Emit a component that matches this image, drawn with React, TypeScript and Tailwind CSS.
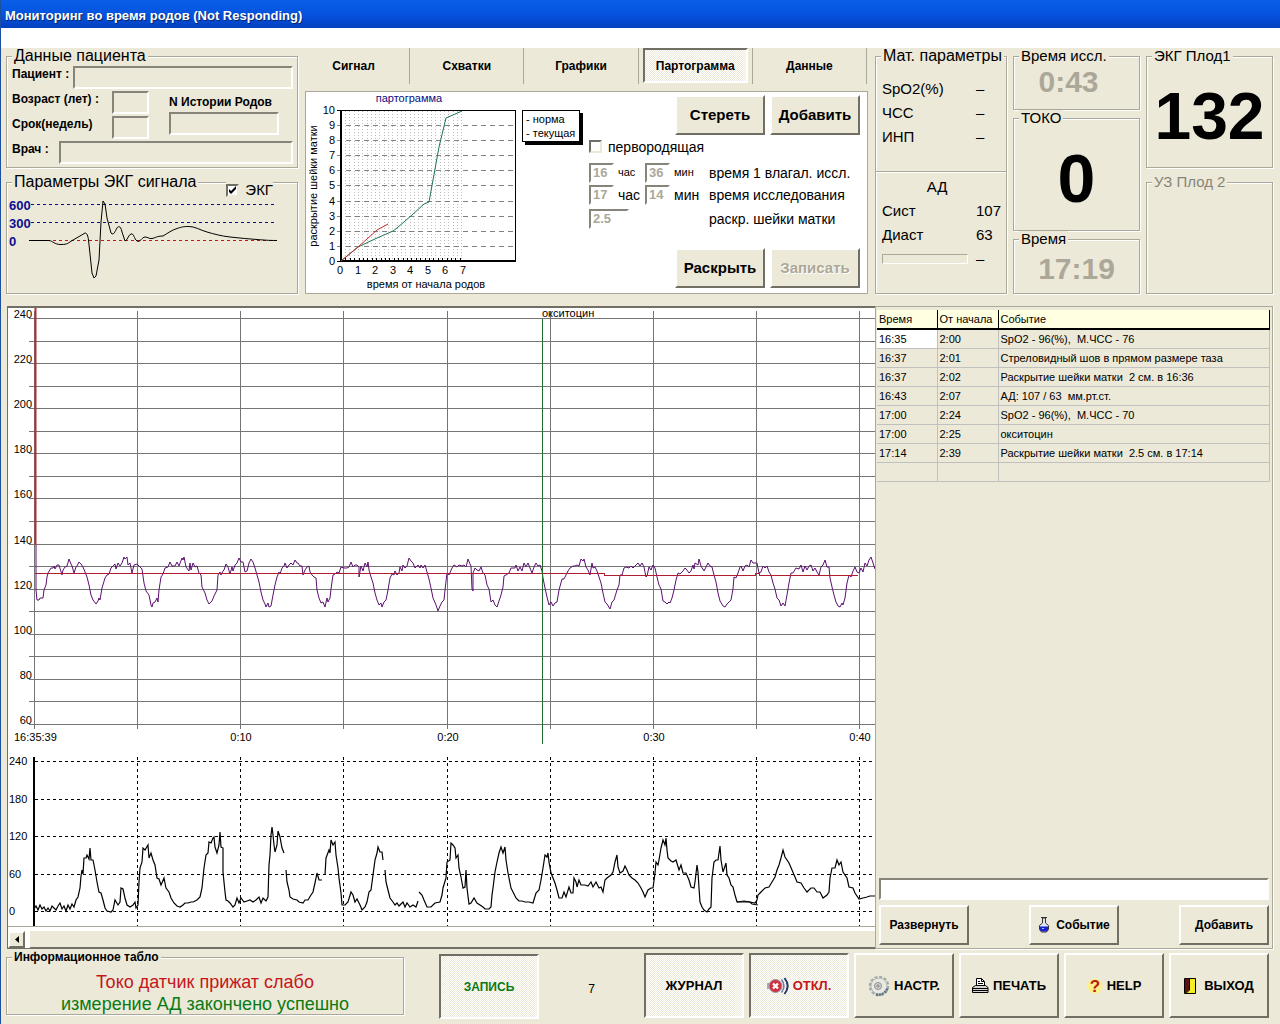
import { useState } from "react";
import type { ButtonHTMLAttributes, InputHTMLAttributes, ReactNode } from "react";
import { cva } from "class-variance-authority";
import clsx from "clsx";

const TABS = ["Сигнал", "Схватки", "Графики", "Партограмма", "Данные"];

const EVENTS = [
  { time: "16:35", offset: "2:00", text: "SpO2 - 96(%),  М.ЧСС - 76" },
  { time: "16:37", offset: "2:01", text: "Стреловидный шов в прямом размере таза" },
  { time: "16:37", offset: "2:02", text: "Раскрытие шейки матки  2 см. в 16:36" },
  { time: "16:43", offset: "2:07", text: "АД: 107 / 63  мм.рт.ст." },
  { time: "17:00", offset: "2:24", text: "SpO2 - 96(%),  М.ЧСС - 70" },
  { time: "17:00", offset: "2:25", text: "окситоцин" },
  { time: "17:14", offset: "2:39", text: "Раскрытие шейки матки  2.5 см. в 17:14" },
  { time: "", offset: "", text: "" },
];

// fetal heart rate trace
const FHR =
  "36,545 36,590 37,600 39,600 40,598 43,598 44,590 46,585 47,577 48,573 51,568 53,568 54,566 55,569 57,565 59,565 62,575 63,570 65,567 67,566 69,559 71,564 72,566 74,573 76,567 77,566 79,562 81,564 83,567 85,572 87,577 89,585 91,595 93,600 96,604 98,601 99,598 100,600 102,588 105,578 107,575 109,574 111,568 113,566 115,564 116,569 118,563 120,566 122,563 124,557 125,559 127,557 128,565 130,563 132,573 134,565 137,564 139,566 142,569 144,583 146,591 149,595 151,605 152,607 153,603 155,602 157,598 158,602 159,590 161,577 163,574 165,568 168,567 170,562 172,566 175,566 177,562 179,566 182,558 183,560 184,557 186,567 189,571 190,563 191,570 193,563 195,567 197,566 199,573 201,575 202,587 205,593 207,600 209,604 212,601 214,596 217,590 218,575 220,572 221,575 223,571 224,570 226,564 228,567 230,574 232,567 233,571 235,565 237,563 239,558 241,562 243,562 245,572 247,571 249,563 251,559 253,562 255,568 257,575 259,582 261,592 263,600 265,604 266,607 268,603 269,607 271,606 273,595 275,585 277,577 279,572 280,574 282,568 284,566 285,563 287,568 289,565 291,563 293,565 295,560 297,563 298,563 300,566 302,566 303,575 305,570 307,567 309,566 310,572 312,575 314,577 316,578 317,590 319,598 321,603 323,602 325,607 327,598 328,602 330,598 331,589 333,575 335,574 337,572 339,573 341,567 344,568 347,568 349,567 351,562 353,567 355,565 357,565 359,567 359,577 361,566 363,571 365,563 367,567 368,562 369,570 371,577 373,583 375,593 377,600 379,605 381,603 382,607 384,602 386,600 388,590 390,578 392,574 394,575 395,571 397,575 399,573 400,567 402,571 403,565 405,568 407,566 409,558 411,561 413,563 415,568 418,565 420,568 421,565 423,568 425,565 427,572 429,579 431,588 433,598 436,605 438,611 440,606 442,602 444,600 445,590 447,573 449,575 452,568 454,565 457,567 459,565 462,566 464,565 466,567 468,559 470,564 471,566 472,589 473,591 473,573 475,568 477,570 479,571 481,567 483,573 485,575 487,585 489,589 491,602 493,600 495,605 497,607 499,601 501,595 503,587 504,576 506,575 509,573 511,568 513,568 515,568 516,565 518,571 520,567 522,571 524,563 526,567 528,563 530,568 532,573 534,567 536,563 538,566 540,565 542,571 543,578 545,588 547,597 549,605 551,602 553,606 555,603 557,602 559,590 562,579 564,579 566,575 568,571 570,568 573,566 575,566 577,565 579,566 581,559 583,561 584,559 586,567 588,570 590,575 592,563 593,568 595,567 597,571 599,577 601,583 603,593 605,602 607,604 610,609 612,602 614,600 617,590 619,585 620,575 622,575 624,568 626,567 629,568 631,566 633,568 635,566 638,563 640,566 642,563 644,567 646,577 647,576 649,567 651,570 653,565 655,568 657,577 659,585 661,589 663,601 665,602 667,604 669,602 670,603 672,598 674,590 676,580 678,573 680,574 683,571 685,568 687,570 689,573 691,571 693,565 694,569 695,563 698,565 699,559 701,566 704,571 706,567 708,563 710,566 712,567 714,575 716,582 718,593 720,601 723,606 725,607 727,604 729,602 731,600 733,589 734,577 736,578 738,573 740,567 741,566 743,571 745,566 747,565 749,567 751,560 753,563 755,563 757,563 759,573 761,572 763,566 765,568 767,566 769,572 771,575 773,583 775,589 777,598 779,600 781,606 783,603 785,606 787,595 789,583 791,573 793,573 796,568 799,569 801,565 803,572 805,566 807,570 809,566 811,565 813,571 815,568 817,572 819,575 821,567 823,565 825,560 827,567 829,567 830,578 832,587 834,595 836,602 838,606 840,607 842,603 843,605 845,598 847,583 849,575 851,577 853,571 855,567 857,572 859,573 861,568 863,572 865,563 867,566 869,560 871,557 873,563 875,569";

// uterine activity, one entry per uninterrupted piece of the signal
const TOCO = [
  "34,909 36,906 38,910 40,905 42,909 44,907 46,911 48,908 50,911 52,906 54,908 56,910 58,906 60,903 62,909 64,906 66,911 68,905 70,909 72,904 74,907 76,900 78,897 80,888 81,876 82,870 83,874 84,858 86,858 87,855 89,859 90,848 91,860 93,860 95,870 97,882 99,892 101,893 103,900 105,908 107,911 111,912 113,910 115,900 118,905 120,902 121,888 123,889 125,898 127,905 130,907 133,905 135,902 136,908 138,905 139,882 140,868 142,862 143,848 145,850 148,845 149,858 151,853 153,860 155,865 157,878 159,879 161,885 164,878 166,888 169,892 171,898 174,903 177,906 180,907 183,905 185,903 188,903 191,902 193,902 197,900 200,897 202,888 204,868 206,855 208,853 209,842 211,843 213,838 214,837 215,847 217,853 219,845 220,832 221,847 223,848 223,872 225,892 226,900 228,901 230,903 233,907 235,905 237,898 239,903 241,898 244,902 247,901 250,900 253,902 256,900 259,897 261,903 263,898 266,901 268,897 269,865 270,855 271,835 272,827 273,835 274,845 275,852 277,845 278,831 280,837 282,848 284,853",
  "286,870 287,882 289,890 290,897 293,899 297,900 299,902 303,903 305,900 308,900 311,895 313,892 315,883 317,873 319,880 322,880",
  "325,875 326,858 329,850 330,853 331,840 333,845 335,842 336,855 338,868 339,878 341,893 342,905 345,905 348,902 351,892 353,895 355,902 357,899 360,905 362,910 365,907 367,902 369,892 371,890 373,875 375,860 377,853 378,847 380,852 382,852 383,860",
  "385,870 386,882 388,890 390,898 393,902 395,905 397,903 399,906 401,904 403,902 405,907 407,903 410,907 413,905 416,907 418,901",
  "419,892 422,895 424,900 427,907 431,907 435,903 440,902 442,895 443,888 446,878 447,862 450,860 451,843 453,845 455,848 456,858 458,855 459,868 461,877 463,888 465,887 466,870 467,888 469,904 471,903 474,898 477,903 480,905 483,907 485,909 489,909 491,907 492,895 493,888 495,872 497,862 499,853 501,847 503,853 505,847 506,860 508,873 511,888 513,892 516,898 519,901 522,901 525,902 529,902 533,903 536,893 539,890 541,880 543,868 545,855 547,857 548,853 549,862 551,873 555,883 557,890 559,898 562,898 564,892 566,897 569,887 571,893 573,893 574,878 576,882 577,887 579,880 581,885 585,885 588,886 591,882 593,887 596,882 599,888 601,887 603,892 605,880 607,878 611,875 613,872 615,862 617,855 618,867 620,873 623,871 625,866 627,870 629,875 632,878 635,880 638,883 641,888 643,892 645,897 648,890 651,888 653,888 655,873 656,862 658,865 659,860 661,848 663,840 665,845 666,838 667,850 668,858 671,861 673,862 676,860 679,870 681,865 683,873 686,873 689,880 691,887 694,888 695,882 697,865 698,872 699,888 700,902 702,907 704,910 707,912 709,909 711,907 712,878 714,862 716,860 718,860 720,846 721,860 723,872 726,863 727,875 729,878 731,885 733,887 735,895 737,902 741,902 745,902 750,902 755,903 757,900 758,895 761,892 765,888 769,887 772,882 775,877 777,870 779,865 781,858 783,850 785,857 789,863 792,870 795,877 797,882 801,883 804,888 807,892 811,888 814,888 817,892 820,892 823,898 827,895 829,892 830,878 832,868 835,868 837,860 839,865 841,862 843,872 847,878 849,887 853,888 855,893 859,899 863,898 867,897 870,896 875,896",
  "737,902 744,901 750,902 752,904 758,905",
];

const FHR_LINES = Array.from({ length: 19 }, (_, i) => 240 - i * 10);
const TIME_LINES = Array.from({ length: 9 }, (_, i) => 34 + Math.round(i * 103.15));
const fhrY = (bpm: number) => 318 + Math.round(((240 - bpm) * 406) / 180);
const tocoY = (v: number) => 761 + Math.round(((240 - v) * 150) / 240);

const button = cva(
  "flex items-center justify-center border-2 font-bold leading-4 whitespace-nowrap",
  {
    variants: {
      pressed: {
        true: "border-t-[#716f64] border-l-[#716f64] border-r-white border-b-white bg-[repeating-conic-gradient(#fff_0_25%,#ece9d8_0_50%)] bg-[length:2px_2px]",
        false:
          "border-t-white border-l-white border-r-[#716f64] border-b-[#716f64] bg-[#ece9d8]",
      },
    },
    defaultVariants: { pressed: false },
  }
);

function Button({
  pressed,
  className,
  ...props
}: ButtonHTMLAttributes<HTMLButtonElement> & { pressed?: boolean }) {
  return (
    <button type="button" className={clsx(button({ pressed }), className)} {...props} />
  );
}

function Group({
  title,
  titleClass = "text-[15px]",
  className,
  children,
}: {
  title: string;
  titleClass?: string;
  className?: string;
  children?: ReactNode;
}) {
  return (
    <fieldset
      className={clsx(
        "relative min-w-0 border border-[#aca899] shadow-[1px_1px_0_#fff,inset_1px_1px_0_#fff]",
        className
      )}
    >
      <legend
        className={clsx("ml-[5px] bg-[#ece9d8] px-0.5 leading-4 whitespace-nowrap", titleClass)}
      >
        {title}
      </legend>
      {children}
    </fieldset>
  );
}

function Field({ className, ...props }: InputHTMLAttributes<HTMLInputElement>) {
  return (
    <input
      type="text"
      className={clsx(
        "min-w-0 border-2 border-t-[#87857a] border-l-[#87857a] border-r-white border-b-white px-0.5 outline-none",
        className
      )}
      {...props}
    />
  );
}

function CheckBox({
  id,
  label,
  defaultChecked,
  className,
}: {
  id: string;
  label: string;
  defaultChecked?: boolean;
  className?: string;
}) {
  return (
    <div className={clsx("flex items-center gap-1.5", className)}>
      <span className="relative size-[13px]">
        <input
          id={id}
          type="checkbox"
          defaultChecked={defaultChecked}
          className="peer block size-[13px] appearance-none border-2 border-t-[#716f64] border-l-[#716f64] border-r-[#ece9d8] border-b-[#ece9d8] bg-white"
        />
        <svg
          viewBox="0 0 13 13"
          className="pointer-events-none absolute inset-0 hidden size-[13px] peer-checked:block"
        >
          <path d="M3 5v3l2 2 5-5V2L5 7z" fill="#000" />
        </svg>
      </span>
      <label htmlFor={id} className="whitespace-nowrap">
        {label}
      </label>
    </div>
  );
}

function PatientGroup() {
  return (
    <Group title="Данные пациента" titleClass="text-base/4" className="h-[120px]">
      <div className="flex flex-col gap-0.5 pt-0.5 pr-1 pl-[5px] text-xs font-bold">
        <div className="flex h-[23px] justify-between">
          <label htmlFor="patient" className="leading-4">Пациент :</label>
          <Field id="patient" className="w-[220px]" />
        </div>
        <div className="flex justify-between pr-3.5">
          <div className="flex w-[137px] flex-col gap-0.5">
            <div className="flex h-[23px] justify-between">
              <label htmlFor="age" className="leading-4">Возраст (лет) :</label>
              <Field id="age" className="w-[37px]" />
            </div>
            <div className="flex h-[23px] justify-between">
              <label htmlFor="weeks" className="leading-4">Срок(недель)</label>
              <Field id="weeks" className="w-[37px]" />
            </div>
          </div>
          <div className="flex w-[110px] flex-col pt-[3px]">
            <label htmlFor="history" className="leading-4 whitespace-nowrap">
              N Истории Родов
            </label>
            <Field id="history" className="mt-0.5 h-[23px]" />
          </div>
        </div>
        <div className="flex h-[23px] justify-between">
          <label htmlFor="doctor" className="leading-4">Врач :</label>
          <Field id="doctor" className="w-[234px]" />
        </div>
      </div>
    </Group>
  );
}

function EcgGroup() {
  return (
    <Group title="Параметры ЭКГ сигнала" titleClass="text-base/4" className="h-[120px]">
      <CheckBox
        id="ecg"
        label="ЭКГ"
        defaultChecked
        className="absolute -top-2 right-6 bg-[#ece9d8] text-[15px] leading-4"
      />
      <svg viewBox="7 190 290 100" className="block h-[100px] w-[290px]">
        <g fontFamily="Liberation Sans" fontSize="13" fontWeight="bold" fill="#0d0d92">
          <text x="9" y="210">600</text>
          <text x="9" y="228">300</text>
          <text x="9" y="246">0</text>
        </g>
        <g fill="none" strokeDasharray="3 3" shapeRendering="crispEdges">
          <path d="M31 204.500H277M31 222.500H277" stroke="#0d0d80" />
          <path d="M29 240.500H277" stroke="#c01818" />
        </g>
        <path
          d="M29 240.500H49C53 241 54 244.500 61 244.500S68 243 73 240L80 236 85 233C87 233 88 236 88.500 240L90 254 92 273 94 278 96 276 99 260 101 222 103 201 105 204 107 218 111 233C114 236 115 231 117 228 119 225 121 227 122 232L125 241C128 240 128 235 131 234S134 239 137 241 142 237 145 237 149 239 152 238.500 157 236 163 236C168 233 172 230 177 228.500S183 226.500 189 226.500 200 230 207 232 221 236 230 237 250 239 257 239.500 268 240.500 277 240.500"
          fill="none"
          stroke="#000"
        />
      </svg>
    </Group>
  );
}

function PartogramChart() {
  return (
    <svg viewBox="306 92 278 201" className="block h-[201px] w-[278px] shrink-0">
      <g shapeRendering="crispEdges" fill="none">
        {Array.from({ length: 28 }, (_, i) => 345 + Math.round(i * 4.3)).map((x) => (
          <path key={x} d={`M${x}.5 111V261`} stroke="#bdbdbd" strokeDasharray="1 2" />
        ))}
        {Array.from({ length: 9 }, (_, i) => 261 - Math.round((i + 1) * 15.1)).map((y) => (
          <path key={y} d={`M337 ${y}.5H515`} stroke="#808080" strokeDasharray="5 4" />
        ))}
        {Array.from({ length: 28 }, (_, i) => 341 + Math.round(i * 4.4)).map((x) => (
          <path key={x} d={`M${x}.5 258V262`} stroke="#000" />
        ))}
        <path d="M337 110.500H515.500V261M337 261.500H341" stroke="#000" />
        <path d="M341 110V262M340 261H516" stroke="#000" strokeWidth="2" />
      </g>
      <polyline
        points="341,261 358,247 377,238 393,231 397,228 412,215 424,204 429,202 433,180 439,147 446,118 462,111"
        fill="none"
        stroke="#1d7357"
      />
      <polyline points="341,261 358,247 367,239 377,230 388,224" fill="none" stroke="#c22a2a" />
      <g fontFamily="Liberation Sans" fontSize="11">
        <text x="409" y="102" textAnchor="middle" fill="#0d0d80">партограмма</text>
        {Array.from({ length: 11 }, (_, i) => (
          <text key={i} x="335" y={265 - Math.round(i * 15.1)} textAnchor="end">{i}</text>
        ))}
        {Array.from({ length: 8 }, (_, i) => (
          <text key={i} x={340 + Math.round(i * 17.5)} y="274" textAnchor="middle">{i}</text>
        ))}
        <text x="426" y="288" textAnchor="middle">время от начала родов</text>
        <text transform="translate(317 186) rotate(-90)" textAnchor="middle">
          раскрытие шейки матки
        </text>
        <path d="M525 113H583V145H525z" />
        <path d="M522.500 110.500H579.500V141.500H522.500z" fill="#fff" stroke="#000" shapeRendering="crispEdges" />
        <text x="526" y="123">- норма</text>
        <text x="526" y="137">- текущая</text>
      </g>
    </svg>
  );
}

function PartogramForm() {
  const num =
    "h-5 bg-white text-[13px] font-bold text-[#aca899] border-t-[#716f64] border-l-[#716f64] border-r-[#ece9d8] border-b-[#ece9d8]";
  return (
    <div className="flex flex-1 flex-col justify-between py-[3px] pr-[7px] pl-[5px] text-sm">
      <div className="flex justify-end gap-[5px] text-[15px]">
        <Button className="h-10 w-[90px]">Стереть</Button>
        <Button className="h-10 w-[90px]">Добавить</Button>
      </div>
      <div className="mb-4">
        <CheckBox id="primipara" label="первородящая" className="h-4" />
        <div className="mt-2 grid grid-cols-[56px_64px_1fr] gap-y-0.5 whitespace-nowrap">
          <div className="flex items-center gap-1">
            <Field id="h1" defaultValue="16" disabled className={clsx(num, "w-[25px]")} />
            <label htmlFor="h1" className="text-[11px]">час</label>
          </div>
          <div className="flex items-center gap-1">
            <Field id="m1" defaultValue="36" disabled className={clsx(num, "w-[25px]")} />
            <label htmlFor="m1" className="text-[11px]">мин</label>
          </div>
          <span>время 1 влагал. иссл.</span>
          <div className="flex items-center gap-1">
            <Field id="h2" defaultValue="17" disabled className={clsx(num, "w-[25px]")} />
            <label htmlFor="h2">час</label>
          </div>
          <div className="flex items-center gap-1">
            <Field id="m2" defaultValue="14" disabled className={clsx(num, "w-[25px]")} />
            <label htmlFor="m2">мин</label>
          </div>
          <span>время исследования</span>
          <div className="col-span-2 pt-0.5">
            <Field id="dilation" defaultValue="2.5" disabled className={clsx(num, "block w-10")} />
          </div>
          <label htmlFor="dilation" className="pt-0.5">раскр. шейки матки</label>
        </div>
      </div>
      <div className="flex justify-end gap-[5px] pb-0.5 text-[15px]">
        <Button className="h-10 w-[90px]">Раскрыть</Button>
        <Button disabled className="h-10 w-[90px] text-[#aca899] text-shadow-[1px_1px_0_#fff]">
          Записать
        </Button>
      </div>
    </div>
  );
}

function Tabs() {
  const [active, setActive] = useState("Партограмма");
  return (
    <div className="flex min-w-0 flex-1 flex-col">
      <div className="mr-px grid h-9 grid-cols-[112fr_114fr_114fr_114fr_114fr]">
        {TABS.map((tab) => (
          <div key={tab} className="flex border-r border-[#aca899] pr-1 pb-px pl-1">
            <button
              type="button"
              onClick={() => setActive(tab)}
              className={clsx(
                "flex-1 text-xs font-bold",
                tab === active && button({ pressed: true })
              )}
            >
              {tab}
            </button>
          </div>
        ))}
      </div>
      <div className="mt-[7px] ml-[7px] flex flex-1 border border-[#aca899] bg-white">
        <PartogramChart />
        <PartogramForm />
      </div>
    </div>
  );
}

function VitalRow({ label, value }: { label: string; value: string }) {
  return (
    <div className="grid h-6 grid-cols-[94px_1fr] items-center">
      <dt>{label}</dt>
      <dd>{value}</dd>
    </div>
  );
}

function MotherGroup() {
  return (
    <Group title="Мат. параметры" titleClass="text-base/4" className="w-[132px]">
      <dl className="px-1.5 pt-[13px] text-[15px] leading-4">
        <VitalRow label="SpO2(%)" value="–" />
        <VitalRow label="ЧСС" value="–" />
        <VitalRow label="ИНП" value="–" />
      </dl>
      <div className="mt-[22px] border-t border-[#aca899] px-1.5 pt-[3px] text-[15px] leading-4 shadow-[inset_0_1px_0_#fff]">
        <p className="flex h-6 items-center justify-center pr-2">АД</p>
        <dl>
          <VitalRow label="Сист" value="107" />
          <VitalRow label="Диаст" value="63" />
        </dl>
        <div className="grid h-6 grid-cols-[94px_1fr] items-center">
          <div className="h-2.5 w-[86px] border border-t-[#aca899] border-r-white border-b-white border-l-[#aca899]" />
          <span>–</span>
        </div>
      </div>
    </Group>
  );
}

function TrendCharts() {
  return (
    <svg className="block h-[619px] w-full" fontFamily="Liberation Sans" fontSize="11">
      <g transform="translate(-8 -308)">
        <g shapeRendering="crispEdges" stroke="#757575">
          {FHR_LINES.map((v) => (
            <path key={v} d={`M29 ${fhrY(v)}.5H4000`} />
          ))}
          {TIME_LINES.map((x) => (
            <path key={x} d={`M${x}.5 311V729`} />
          ))}
        </g>
        {FHR_LINES.filter((v) => v % 20 === 0).map((v) => (
          <text key={v} x="32" y={fhrY(v)} textAnchor="end">{v}</text>
        ))}
        <text x="14" y="741">16:35:39</text>
        {["0:10", "0:20", "0:30", "0:40"].map((t, i) => (
          <text key={t} x={TIME_LINES[i * 2 + 2] + 1} y="741" textAnchor="middle">{t}</text>
        ))}
        <path d="M35.500 308V545" stroke="#b03030" strokeWidth="2" />
        <polyline points={FHR} fill="none" stroke="#5c1070" />
        <path
          d="M35 573.500H604V575.500H755V573.500H759V575.500H858"
          fill="none"
          stroke="#b01c30"
          shapeRendering="crispEdges"
        />
        <path d="M542.500 319V744" stroke="#1f6a24" shapeRendering="crispEdges" />
        <text x="542" y="317">окситоцин</text>

        <g shapeRendering="crispEdges" stroke="#000" strokeDasharray="3 3">
          {[240, 180, 120, 60, 0].map((v) => (
            <path key={v} d={`M35 ${tocoY(v)}.5H4000`} />
          ))}
          {TIME_LINES.slice(1).map((x) => (
            <path key={x} d={`M${x}.5 757V926`} />
          ))}
        </g>
        {[240, 180, 120, 60, 0].map((v) => (
          <text key={v} x="9" y={tocoY(v) + 4}>{v}</text>
        ))}
        <path d="M34 757V926" stroke="#000" strokeWidth="2" />
        <g fill="none" stroke="#000" strokeWidth="1.2">
          {TOCO.map((points) => (
            <polyline key={points} points={points} />
          ))}
        </g>
        <path d="M8 926.500H4000" stroke="#aca899" shapeRendering="crispEdges" />
      </g>
    </svg>
  );
}

function EventsPanel() {
  return (
    <div className="flex w-[398px] shrink-0 flex-col border border-[#aca899] px-px pt-[3px] shadow-[1px_1px_0_#fff]">
      <table className="mr-px table-fixed border-collapse text-left text-[11px] leading-4">
        <colgroup>
          <col className="w-[60px]" />
          <col className="w-[61px]" />
          <col />
        </colgroup>
        <thead>
          <tr className="h-[19px] bg-[#ffffe1]">
            {["Время", "От начала", "Событие"].map((h) => (
              <th
                key={h}
                className="border-r border-b-2 border-black p-0 pl-0.5 font-normal whitespace-nowrap"
              >
                {h}
              </th>
            ))}
          </tr>
        </thead>
        <tbody>
          {EVENTS.map((e, i) => (
            <tr key={i} className="h-[19px]">
              <td className={clsx("border-r border-b border-[#c0c0c0] p-0 pl-0.5", i === 0 && "bg-white")}>
                {e.time}
              </td>
              <td className="border-r border-b border-[#c0c0c0] p-0 pl-0.5">{e.offset}</td>
              <td className="border-r border-b border-[#c0c0c0] p-0 pl-0.5 whitespace-pre">
                {e.text}
              </td>
            </tr>
          ))}
        </tbody>
      </table>
      <div className="mt-auto px-0.5 pb-[3px]">
        <Field aria-label="Событие" className="block h-[22px] w-full border-t-[#716f64] border-l-[#716f64] bg-white text-xs" />
        <div className="mt-[5px] flex justify-between text-xs">
          <Button className="h-10 w-[90px]">Развернуть</Button>
          <Button className="h-10 w-[90px] gap-1.5">
            <FlaskIcon />
            Событие
          </Button>
          <Button className="h-10 w-[90px]">Добавить</Button>
        </div>
      </div>
    </div>
  );
}

function FlaskIcon() {
  return (
    <svg viewBox="0 0 12 16" className="h-4 w-3">
      <path d="M4.500 1v5L1.500 8.500v4l2 2.500h5l2-2.500v-4l-3-2.500V1z" fill="#dfe8f2" stroke="#333" />
      <path d="M2 9.500h8V13l-1.500 1.500h-5L2 13z" fill="#1a22c8" />
      <path d="M3 .5h6" stroke="#333" />
      <path d="M4 11h2v1H4z" fill="#a8c0ff" />
    </svg>
  );
}

function MuteIcon() {
  return (
    <svg viewBox="0 0 22 18" className="h-[18px] w-[22px]" fill="none">
      <path d="M0 6h3l5-4v14l-5-4H0z" fill="#a9a9bd" />
      <circle cx="8.500" cy="9" r="6.500" fill="#cf3140" stroke="#a79aa8" />
      <path d="M6 6.500l5 5m0-5l-5 5" stroke="#fff" strokeWidth="2.400" />
      <path d="M14.500 2.500c3 4 3 9 0 13" stroke="#7280a8" strokeWidth="1.600" />
      <path d="M17.500 1c4 5 4 11 0 16" stroke="#26386e" strokeWidth="2" />
    </svg>
  );
}

function GearIcon() {
  return (
    <svg viewBox="0 0 22 22" className="size-[22px]" fill="none">
      <circle cx="11" cy="11" r="9" stroke="#a3aaa8" strokeWidth="2.500" strokeDasharray="3 1.700" />
      <circle cx="11" cy="11" r="8" fill="#e9e9e4" stroke="#b4b8b6" />
      <path d="M8 19.500c5 1 9-1 11.500-6" stroke="#5c757c" strokeWidth="2.500" strokeDasharray="2 1" />
      <circle cx="10" cy="11" r="3.500" fill="#d6d7d4" stroke="#8a8f8f" />
      <circle cx="10" cy="11" r="1.200" fill="#fff" stroke="#777" />
    </svg>
  );
}

function PrinterIcon() {
  return (
    <svg viewBox="0 0 17 17" className="size-[17px]" stroke="#000">
      <path d="M4.500 8.500v-7h5l3 3v4z" fill="#fff" />
      <path d="M9.500 1.500v3h3M6 4.500h2M6 6.500h5" fill="none" />
      <path d="M3.500 8.500h10l2.500 2v5H.5v-5z" fill="#d4d4d4" />
      <path d="M.5 11.500H16M.5 13.500H16" fill="none" />
    </svg>
  );
}

function HelpIcon() {
  return (
    <svg viewBox="0 0 16 18" className="h-[18px] w-4">
      <circle cx="8" cy="9" r="7.500" fill="#ffef8a" />
      <text x="8" y="15" textAnchor="middle" fontFamily="Liberation Sans" fontSize="17" fontWeight="bold" fill="#b81c14">
        ?
      </text>
    </svg>
  );
}

function DoorIcon() {
  return (
    <svg viewBox="0 0 12 16" className="h-4 w-3">
      <path d="M.5.5h11v15H.5z" fill="#f6ee25" stroke="#000" />
      <path d="M1 1h4v11l-3 3H1z" fill="#5e1010" />
      <path d="M5.500 1v11L2 15.500" fill="none" stroke="#000" />
    </svg>
  );
}

function Toolbar() {
  return (
    <div className="flex items-start pr-1 text-[13px]">
      <Group
        title="Информационное табло"
        titleClass="text-xs/4 font-bold"
        className="h-[66px] w-[398px]"
      >
        <div className="flex flex-col items-center pt-1.5 text-lg/[22px]">
          <p className="text-[#c4161c]">Токо датчик прижат слабо</p>
          <p className="text-[#0a7a14]">измерение АД закончено успешно</p>
        </div>
      </Group>
      <Button pressed className="mt-[5px] ml-[35px] h-[65px] w-[100px] text-xs text-[#0a7a14]">
        ЗАПИСЬ
      </Button>
      <span className="mt-8 flex-1 text-center text-xs leading-4">7</span>
      <div className="mt-1 flex gap-[5px]">
        <Button pressed className="h-[65px] w-[100px]">ЖУРНАЛ</Button>
        <Button pressed className="h-[65px] w-[100px] gap-1 text-[#c4161c]">
          <MuteIcon />
          ОТКЛ.
        </Button>
        <Button className="h-[65px] w-[100px] gap-1">
          <GearIcon />
          НАСТР.
        </Button>
        <Button className="h-[65px] w-[100px] gap-1">
          <PrinterIcon />
          ПЕЧАТЬ
        </Button>
        <Button className="h-[65px] w-[100px] gap-1">
          <HelpIcon />
          HELP
        </Button>
        <Button className="h-[65px] w-[100px] gap-2">
          <DoorIcon />
          ВЫХОД
        </Button>
      </div>
    </div>
  );
}

export default function App() {
  return (
    <div className="flex min-h-screen flex-col border-l border-[#1c4fa0] bg-[#ece9d8] font-['Liberation_Sans',sans-serif] text-black">
      <header className="flex h-7 items-center bg-linear-to-b from-[#0a5fe8] via-[#0453df] to-[#0340c0] pt-1 pl-1">
        <h1 className="text-[13px] font-bold text-white text-shadow-[1px_1px_0_#0a246a]">
          Мониторинг во время родов (Not Responding)
        </h1>
      </header>
      <div className="h-5 bg-white" />

      <main className="flex flex-1 flex-col pr-[7px] pb-[5px] pl-[5px]">
        <div className="flex">
          <div className="flex w-[292px] flex-col gap-1.5">
            <PatientGroup />
            <EcgGroup />
          </div>
          <Tabs />
          <div className="ml-[7px] flex gap-1.5">
            <MotherGroup />
            <div className="flex w-[127px] flex-col">
              <Group title="Время иссл." className="h-[62px]">
                <p className="pr-4 text-center text-3xl leading-9 font-bold text-[#aca899]">0:43</p>
              </Group>
              <Group title="ТОКО" className="flex-1">
                <p className="pt-3 text-center text-[68px] leading-[80px] font-bold">0</p>
              </Group>
              <Group title="Время" className="h-[63px]">
                <p className="pt-1 text-center text-3xl leading-9 font-bold text-[#aca899]">17:19</p>
              </Group>
            </div>
            <div className="flex w-[127px] flex-col gap-1.5">
              <Group title="ЭКГ Плод1" className="h-[120px]">
                <p className="pt-2.5 text-center text-[66px] leading-[84px] font-bold">132</p>
              </Group>
              <Group title="УЗ Плод 2" titleClass="text-[15px] text-[#87857a]" className="h-[120px]" />
            </div>
          </div>
        </div>

        <div className="mt-3 flex flex-1 pl-px">
          <div className="flex min-w-0 flex-1 flex-col border-t-2 border-l border-t-[#716f64] border-l-[#716f64] bg-white">
            <TrendCharts />
            <div className="mt-1 flex flex-1 gap-[5px] border-b border-[#716f64]">
              <Button aria-label="Назад" className="w-[17px]">
                <svg viewBox="0 0 4 7" className="h-[7px] w-1">
                  <path d="M4 0v7L0 3.500z" />
                </svg>
              </Button>
              <div className="flex-1 border-b border-[#716f64] bg-[#ece9d8]" />
            </div>
          </div>
          <EventsPanel />
        </div>
        <Toolbar />
      </main>
    </div>
  );
}
